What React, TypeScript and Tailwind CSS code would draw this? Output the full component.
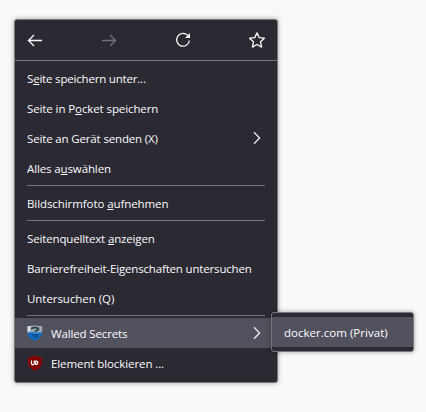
import type { ReactNode } from 'react';

function Key({ children }: { children: ReactNode }) {
  return <span className="underline decoration-1 underline-offset-[1px] [text-decoration-skip-ink:none]">{children}</span>;
}

function Chevron() {
  return (
    <svg className="ml-auto mr-4 h-[14px] w-[8px]" viewBox="0 0 8 14" fill="none" stroke="#e4e4e8" strokeWidth="1.4">
      <path d="M1 1.200 6.600 7 1 12.800" />
    </svg>
  );
}

function Row({ children, icon, submenu, active }: { children: ReactNode; icon?: ReactNode; submenu?: boolean; active?: boolean }) {
  return (
    <div className={active ? 'flex h-[30px] items-center bg-[#52525e] pl-3' : 'flex h-[30px] items-center pl-3'}>
      {icon && <span className="mr-2 h-4 w-4">{icon}</span>}
      <span className="whitespace-pre pt-[2px]">{children}</span>
      {submenu && <Chevron />}
    </div>
  );
}

function Separator() {
  return <div className="mx-3 my-[2px] h-px bg-[#77777b]" />;
}

function SecretsIcon() {
  return (
    <svg viewBox="0 0 16 16" className="h-4 w-4">
      <path d="M.2 1.200 8 .6l7.300.6-.3 7.300H.6Z" fill="#9ea8ad" />
      <path d="M.5 1.500 4.500 1 3 6.500l-2.300.8Z" fill="#d2d8da" />
      <path d="M.6 7.500h14.500c-.2 4.500-3.500 6.800-7.100 8.200C4.300 14.300.8 12 .6 7.500Z" fill="#1268bd" />
      <path d="M4 3.700c2-1.500 7.500-1.500 7.500.4S8.500 5.200 8 6.500" fill="none" stroke="#243f49" strokeWidth="1.800" />
      <path d="M.6 7.400 5 6.600l4 .9 6-.8v1.600l-6 .6-4-.8Z" fill="#3488cc" />
      <path d="M5.500 9.500H7v2H5.500zM8 9h3v1H9v.6h2v2H8v-.9h2v-.5H8z" fill="#173c70" />
    </svg>
  );
}

function BlockerIcon() {
  return (
    <svg viewBox="0 0 16 16" className="h-4 w-4">
      <path d="M8 .3c2 1.300 4.500 2 7 2.100v5.100c0 4.200-3.200 6.800-7 8.300C4.200 14.300 1 11.700 1 7.500V2.400C3.500 2.300 6 1.600 8 .3Z" fill="#800000" stroke="#6a3037" strokeWidth=".5" />
      <path d="M4.500 5.500v3a1.300 1.300 0 0 0 2.800 0v-3M8.700 6v3.500h.8a1.800 1.800 0 0 0 0-3.500Z" fill="none" stroke="#fff" strokeWidth="1.200" />
    </svg>
  );
}

function Toolbar() {
  return (
    <div className="flex h-[41px] items-center justify-between border-b border-[#77777b] px-3 text-[#fbfbfe]">
      <svg className="h-4 w-4" viewBox="0 0 16 16" fill="none" stroke="currentColor" strokeWidth="1.300">
        <path d="M15 8.500H1.500M7 3 1.500 8.500 7 14" />
      </svg>
      <svg className="h-4 w-4 text-[#73737a]" viewBox="0 0 16 16" fill="none" stroke="currentColor" strokeWidth="1.300">
        <path d="M1 8.500h13.500M9 3l5.500 5.500L9 14" />
      </svg>
      <svg className="h-4 w-4" viewBox="0 0 16 16" fill="none" stroke="currentColor" strokeWidth="1.300">
        <path d="M12.700 3.400A6.400 6.400 0 1 0 14.400 8.500" />
        <path d="M15 1v5h-5Z" fill="currentColor" stroke="none" />
      </svg>
      <svg className="h-4 w-4 overflow-visible" viewBox="0 0 16 16" fill="none" stroke="currentColor" strokeWidth="1.300" strokeLinejoin="round">
        <path d="m8 .9 2.200 4.700 5.200.6-3.900 3.600 1.100 5.300L8 12.500l-4.600 2.600 1.100-5.300L.6 6.200l5.200-.6Z" />
      </svg>
    </div>
  );
}

export default function App() {
  return (
    <div className="relative h-[412px] w-full overflow-hidden bg-[#f9f9f9] pl-[14px] pt-[19px] font-['Open_Sans','Noto_Sans',sans-serif] text-[11.5px] leading-[16px] text-[#fbfbfe]">
      <div className="h-[364px] w-[264px] overflow-hidden rounded-[3px] border border-[#77777b] bg-[#2b2a33] shadow-[0_0_5px_rgba(0,0,0,0.35)]">
        <Toolbar />
        <div className="pt-[2px]">
          <Row><span className="tracking-[-0.19px]">S<Key>e</Key>ite speichern unter...</span></Row>
          <Row><span className="tracking-[-0.1px]">Seite in P<Key>o</Key>cket speichern</span></Row>
          <Row submenu><span className="tracking-[-0.15px]">Seite an Gerät senden (X)</span></Row>
          <Row><span className="tracking-[-0.12px]">Alles a<Key>u</Key>swählen</span></Row>
          <Separator />
          <Row><span className="tracking-[-0.08px]">Bildschirmfoto <Key>a</Key>ufnehmen</span></Row>
          <Separator />
          <Row><span className="tracking-[-0.15px]">Seitenquelltext <Key>a</Key>nzeigen</span></Row>
          <Row><span className="tracking-[-0.17px]">Barrierefreiheit-Eigenschaften untersuchen</span></Row>
          <Row><span className="tracking-[-0.05px]">Untersuchen (Q)</span></Row>
          <Separator />
          <Row icon={<SecretsIcon />} submenu active><span className="tracking-[-0.14px]">Walled Secrets</span></Row>
          <Row icon={<BlockerIcon />}><span className="tracking-[-0.09px]">Element blockieren ...</span></Row>
        </div>
      </div>
      <div className="absolute left-[271px] top-[312px] w-[143px] rounded-[3px] border border-[#77777b] bg-[#2b2a33] py-1 shadow-[0_0_5px_rgba(0,0,0,0.35)]">
        <Row active><span className="tracking-[0.02px]">docker.com (Privat)</span></Row>
      </div>
    </div>
  );
}
